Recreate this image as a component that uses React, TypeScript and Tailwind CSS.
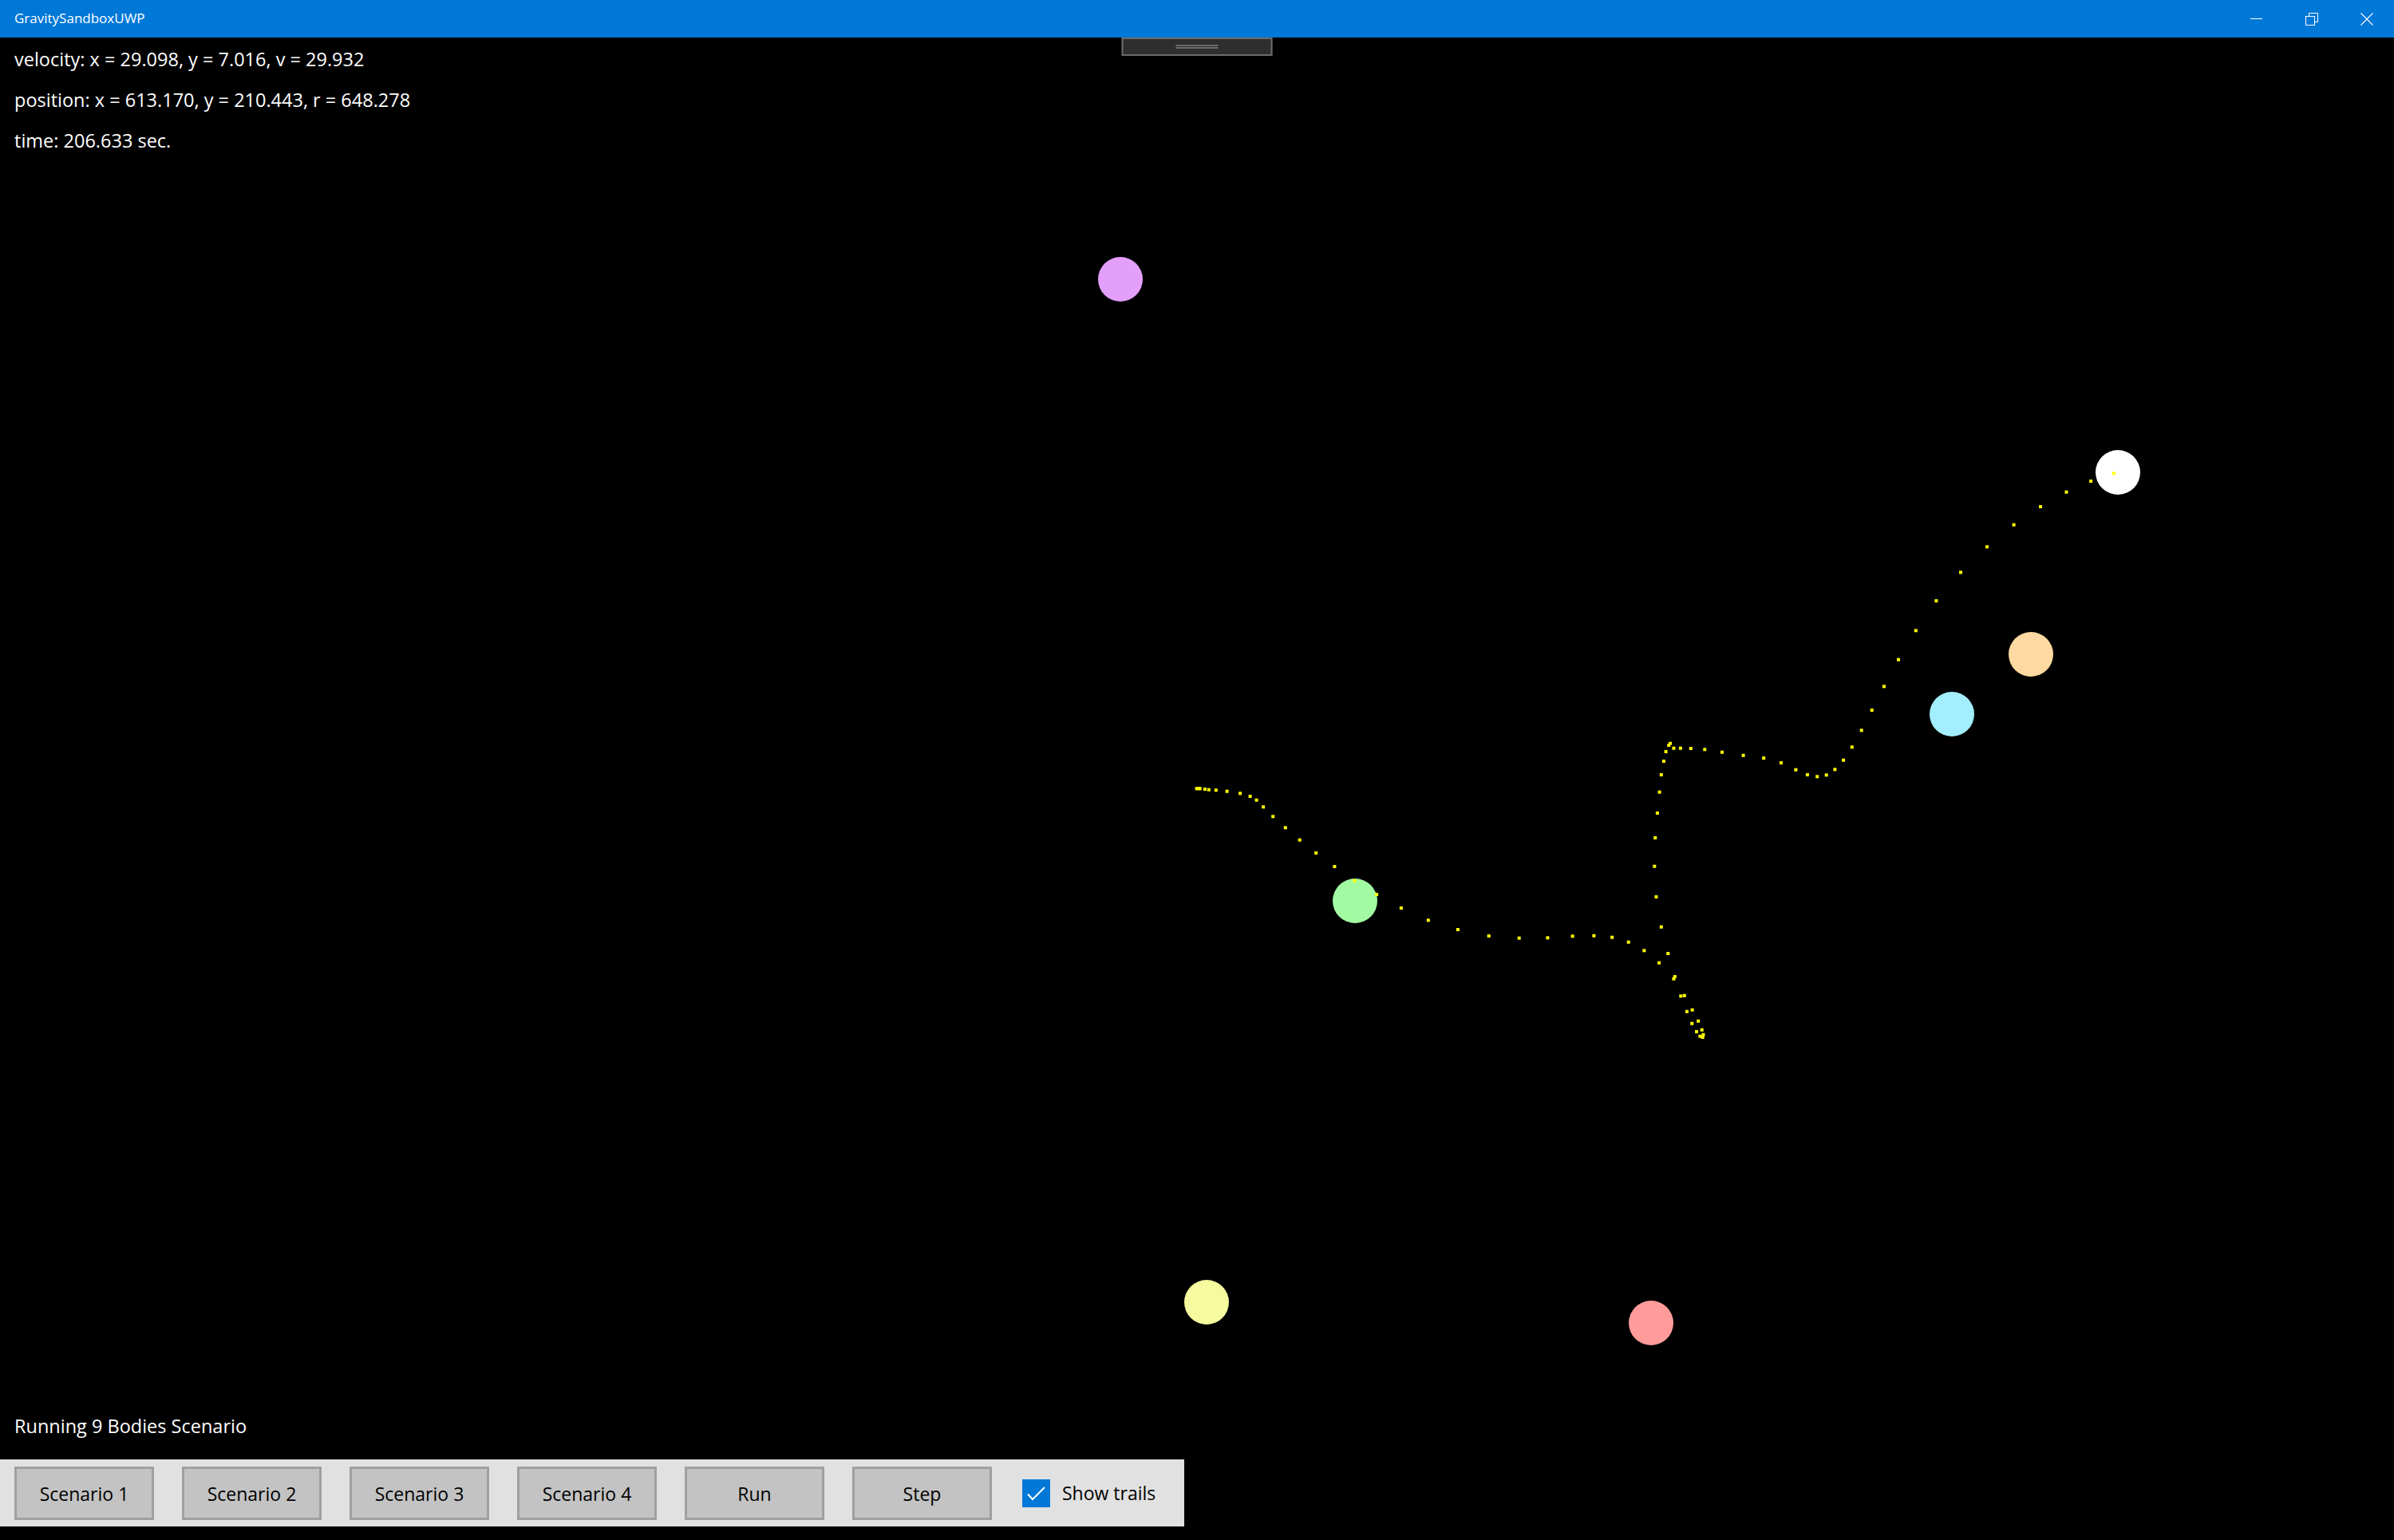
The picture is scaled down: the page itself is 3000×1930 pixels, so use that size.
import React from "react";

const bodies: { x: number; y: number; c: string }[] = [
  { x: 1404, y: 350, c: "#e49ffa" },
  { x: 2654, y: 592, c: "#ffffff" },
  { x: 2545, y: 820, c: "#fed9a1" },
  { x: 2446, y: 895, c: "#a3eeff" },
  { x: 1698, y: 1129, c: "#a2fba2" },
  { x: 1512, y: 1632, c: "#f6fb9f" },
  { x: 2069, y: 1658, c: "#ff9b9b" },
];

const trail: [number, number][] = [
  [1499.6, 988.3], [1502.3, 988.3], [1503.7, 988.3], [1509.9, 989], [1514.8, 989.7],
  [1523.8, 990.3], [1537.6, 991.7], [1554.1, 994.3], [1566.6, 998], [1574.6, 1002.7],
  [1583.1, 1011.3], [1595.2, 1023.3], [1610.8, 1037.3], [1628.7, 1052.7], [1649.2, 1069],
  [1672.4, 1086], [1697.4, 1103.7], [1725.1, 1121], [1755.9, 1138], [1789.8, 1153.3],
  [1826.9, 1165], [1865.7, 1173], [1903.7, 1175.7], [1939.4, 1175.3], [1970.6, 1173.3],
  [1997.4, 1172.7], [2020.2, 1174.7], [2040.7, 1180.7], [2060.4, 1191.3], [2079.1, 1206.7],
  [2097.4, 1226.7], [2106.3, 1248.3], [2113.9, 1267.7], [2120.2, 1282.7], [2126, 1293],
  [2130.4, 1298.7], [2133.6, 1300],
  [2093, 931.7], [2091.2, 934], [2097.4, 937.7], [2105.9, 937.7], [2118.8, 938],
  [2136.3, 939.3], [2158, 942.7], [2087.6, 942], [2084.9, 954], [2081.8, 971],
  [2079.6, 992.7], [2076.9, 1019], [2074.2, 1050], [2073.3, 1085.7], [2075.5, 1124],
  [2081.8, 1161.7], [2090.3, 1195], [2098.8, 1224], [2110.8, 1247.7], [2120.6, 1265.7],
  [2128.2, 1279.7], [2132.7, 1290.7], [2134.5, 1296.7],
  [2184.6, 946.7], [2210.2, 950], [2232, 956], [2250.4, 964.7], [2264.9, 971],
  [2277.2, 973.3], [2288.7, 971.3], [2299.4, 964.3], [2310.1, 952.7], [2320.8, 936.3],
  [2332.7, 915.3], [2345.7, 890], [2361, 860.3], [2379, 826.7], [2400.8, 790.3],
  [2426.4, 753], [2457, 717.3], [2490, 685.3], [2523.6, 657.7], [2557, 635],
  [2589.5, 616.7], [2620.1, 603], [2648.8, 593.3],
];

function Btn({ label }: { label: string }) {
  return (
    <div className="w-[175px] h-[67px] border-[3px] border-[#a0a0a0] bg-[#c3c3c3] flex items-center justify-center text-[23px] text-black pt-[2px]">
      {label}
    </div>
  );
}

export default function App() {
  return (
    <div className="w-[3000px] h-[1930px] bg-black flex flex-col font-['Open_Sans','Noto_Sans',sans-serif] overflow-hidden">
      {/* Title bar */}
      <div className="h-[47px] bg-[#0078d7] flex items-center text-white shrink-0">
        <div className="pl-[18px] text-[17px] flex-1 pb-[2px]">GravitySandboxUWP</div>
        <div className="flex h-full">
          <div className="w-[69px] h-full flex items-center justify-center">
            <svg width="15" height="15" viewBox="0 0 15 15">
              <line x1="0" y1="7.5" x2="15" y2="7.5" stroke="white" strokeWidth="1" />
            </svg>
          </div>
          <div className="w-[69px] h-full flex items-center justify-center">
            <svg width="16" height="16" viewBox="0 0 16 16">
              <rect x="0.5" y="4.5" width="11" height="11" fill="none" stroke="white" strokeWidth="1" />
              <path d="M4.5 4.5 V0.5 H15.5 V11.5 H11.5" fill="none" stroke="white" strokeWidth="1" />
            </svg>
          </div>
          <div className="w-[69px] h-full flex items-center justify-center">
            <svg width="16" height="16" viewBox="0 0 16 16">
              <path d="M0.5 0.5 L15.5 15.5 M15.5 0.5 L0.5 15.5" stroke="white" strokeWidth="1.1" />
            </svg>
          </div>
        </div>
      </div>

      {/* Canvas area */}
      <div className="relative flex-1 flex flex-col">
        <svg
          className="absolute inset-0"
          width="3000"
          height="1883"
          viewBox="0 47 3000 1883"
        >
          {bodies.map((b, i) => (
            <circle key={i} cx={b.x} cy={b.y} r={28} fill={b.c} />
          ))}
          {trail.map(([x, y], i) => (
            <rect key={i} x={x - 2} y={y - 2} width={4} height={4} fill="#ffff00" />
          ))}
        </svg>

        {/* drag handle */}
        <div className="absolute top-0 left-1/2 -translate-x-1/2 w-[189px] h-[23px] border-2 border-[#6b6b6b] bg-[#2e2e2e] flex flex-col items-center justify-center gap-[1px]">
          <div className="w-[53px] h-[2px] bg-[#6a6a6a]" />
          <div className="w-[53px] h-[2px] bg-[#6a6a6a]" />
        </div>

        {/* info text */}
        <div className="relative pl-[18px] pt-[2px] text-white text-[23.5px] leading-[51px]">
          <div>velocity: x = 29.098, y = 7.016, v = 29.932</div>
          <div>position: x = 613.170, y = 210.443, r = 648.278</div>
          <div>time: 206.633 sec.</div>
        </div>

        <div className="flex-1" />

        <div className="relative pl-[18px] text-white text-[23.5px] leading-[40px] mb-[22px]">
          Running 9 Bodies Scenario
        </div>

        <div className="relative w-[1484px] h-[84px] bg-[#e1e1e1] flex items-start pt-[9px] pl-[18px] gap-[35px]">
          <Btn label="Scenario 1" />
          <Btn label="Scenario 2" />
          <Btn label="Scenario 3" />
          <Btn label="Scenario 4" />
          <Btn label="Run" />
          <Btn label="Step" />
          <div className="ml-[3px] h-[67px] flex items-center gap-[15px]">
            <div className="w-[35px] h-[35px] bg-[#0078d7] flex items-center justify-center">
              <svg width="35" height="35" viewBox="0 0 35 35">
                <polyline points="7,18.5 13,25 28,10" fill="none" stroke="white" strokeWidth="2" />
              </svg>
            </div>
            <span className="text-[23px] text-black">Show trails</span>
          </div>
        </div>
        <div className="h-[17px]" />
      </div>
    </div>
  );
}
